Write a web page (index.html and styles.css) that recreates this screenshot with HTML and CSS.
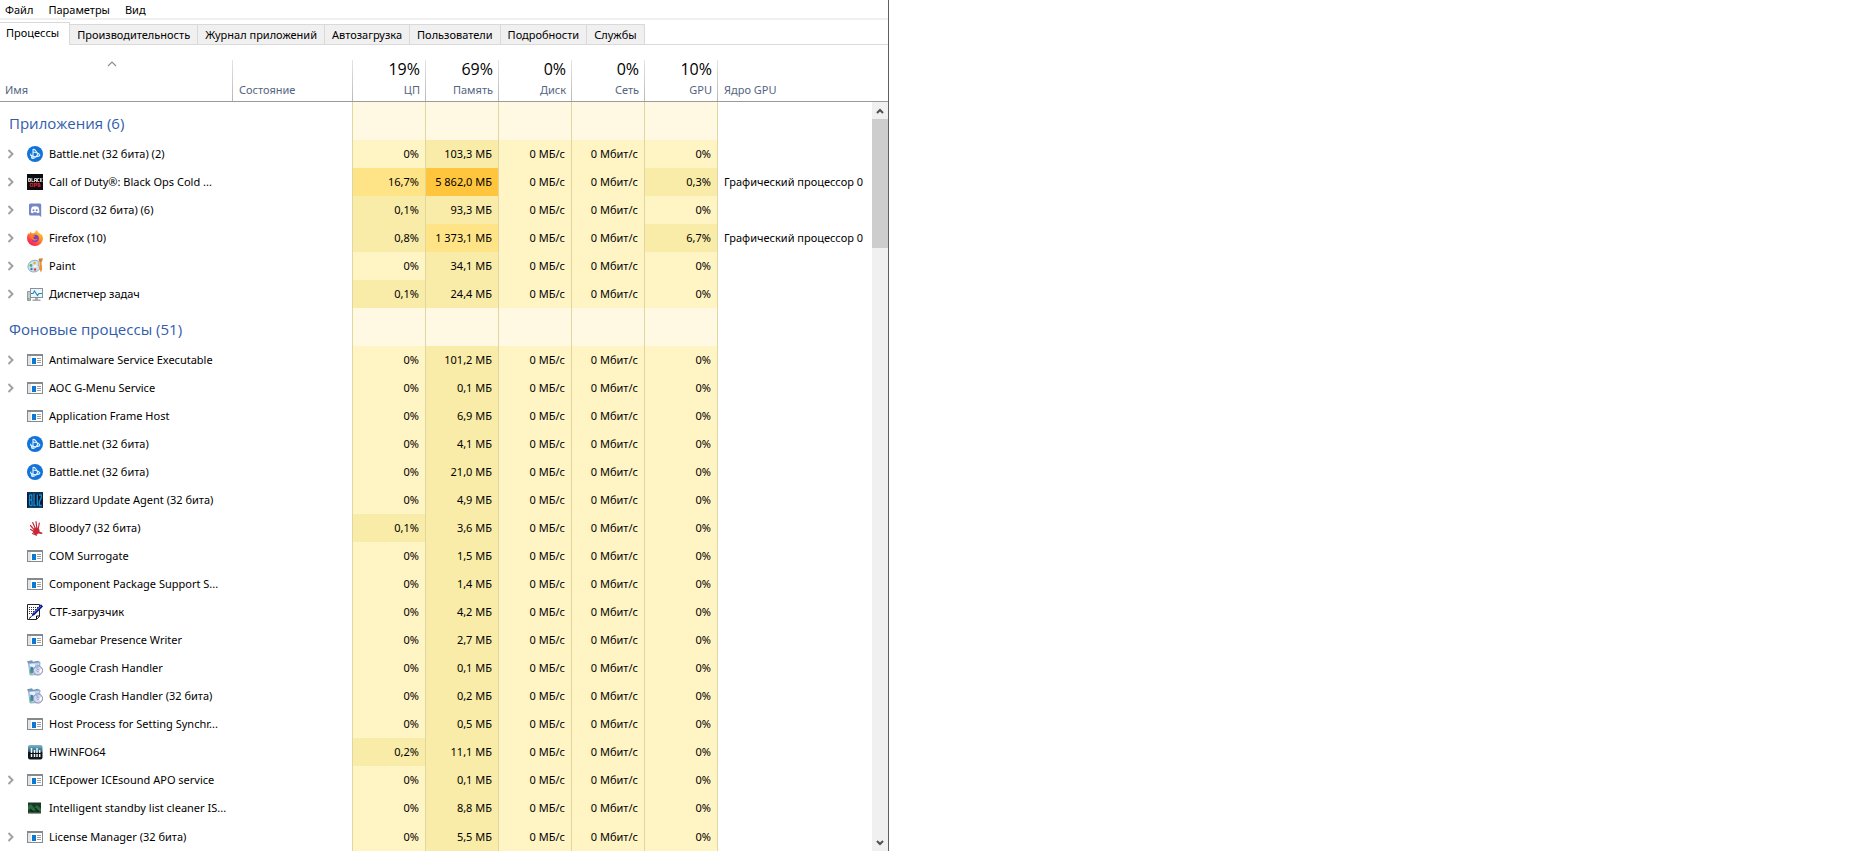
FILE: index.html
```html
<!DOCTYPE html>
<html lang="ru">
<head>
<meta charset="utf-8">
<title>Диспетчер задач</title>
<link rel="stylesheet" href="styles.css">
</head>
<body>
<svg class="sprite" aria-hidden="true">
  <symbol id="chev" viewBox="0 0 16 16"><path d="M5.500 4l4 4-4 4" fill="none" stroke="#a0a0a0" stroke-width="1.900"/></symbol>
  <symbol id="bnet" viewBox="0 0 16 16"><circle cx="8" cy="8" r="8" fill="#1273d8"/><g fill="none" stroke="#e4f4ff" stroke-width="1.100" stroke-linejoin="round" stroke-linecap="round"><path d="M6 11.500V3.500c1.500-.8 3.400 1.500 4.300 4M6.200 6.300c2.800-.3 5.600.8 6.500 2.200.5 1.100-.7 1.700-2.200 1.900M10.800 8c-1 2.200-3 4.200-4.800 4.500-1.500.1-1.800-1.200-1-2.700M3.800 8c-.6.8 0 1.600 1.200 2 1.600.6 3 .8 4.800.7"/></g></symbol>
  <symbol id="cod" viewBox="0 0 16 16"><path fill="#0d0c0e" d="M0 0h16v16H0z"/><g fill="none" stroke="#d8d8da" stroke-width=".9"><path d="M1.500 4v3.500h2V4.500h-2M1.500 6h2M4.800 4v3.500h1.800M7.500 8V4.500h2V8M7.500 6.500h2M12.300 4.500h-1.800v3h1.800M13.500 4v4M15.300 4l-1.500 2 1.500 2"/></g><g fill="none" stroke="#c01f2b" stroke-width="1.100"><path d="M3.300 9.500h2.500v2.800H3.300zM7.500 13V9.500h2v1.700h-2M13 9.500h-2v1.400h2v1.500h-2.300"/></g></symbol>
  <symbol id="disc" viewBox="0 0 16 16"><path fill="#7487c4" d="M3.500 1.500h9.300q1.400 0 1.400 1.400V15l-2-1.500H3.500Q2 13.500 2 12V3q0-1.500 1.500-1.500z"/><path fill="#fff" d="M5 4.800q3-1.300 6.200 0 1.400 2.700 1.300 5.400-1.200 1-2.300 1l-.5-.9H6.500l-.5.9q-1.300-.1-2.200-1Q3.600 7.500 5 4.800z"/><circle cx="6.500" cy="8.200" r="1" fill="#7487c4"/><circle cx="9.700" cy="8.200" r="1" fill="#7487c4"/></symbol>
  <linearGradient id="fg" x1=".9" y1="0" x2=".2" y2="1"><stop offset="0" stop-color="#ffe03a"/><stop offset=".4" stop-color="#ff9526"/><stop offset=".75" stop-color="#ff3d4a"/><stop offset="1" stop-color="#ee1467"/></linearGradient>
  <symbol id="fox" viewBox="0 0 16 16"><path fill="url(#fg)" d="M9.800.2c1 .7 1.500 1.600 1.800 2.500 1 .4 1.300 1 1.500 1.600l1.200-.3c1 1.300 1.700 2.900 1.700 4.500a8 7.500 0 0 1-16 0C0 6.300.6 4.200 1.700 3c.1.600.2.900.5 1.100C2.800 2.900 3.400 2 4.200 1.500c-.1.700.1 1.200.5 1.700L7.500 3C8 1.700 8.700.8 9.800.2z"/><circle cx="8.200" cy="8.300" r="3.600" fill="#7a3fc9"/><path fill="#ff7a2c" d="M3.500 5.500c1.500-.9 3.500-.5 4.800.7L6.300 7.300c-.2 1 .4 1.600 1.400 1.800 1.500.2 2-.7 3-.4-.8 1.700-3.200 2.400-5 1.200-1.500-1-2.400-2.500-2.200-4.400z"/></symbol>
  <symbol id="paint" viewBox="0 0 16 16"><path fill="#cfe3f0" stroke="#6f9ab8" stroke-width=".8" d="M1 9C.7 5 4.500 2 8.500 2.300c2.500.2 3.500 1.600 3.200 3-.3 1.500-.5 2 .6 3.300 1.400 2-.8 4.600-4.300 5.200C4 14.500 1.300 12.500 1 9z"/><circle cx="4" cy="7.500" r="1.400" fill="#55b04c"/><circle cx="7.500" cy="5" r="1.300" fill="#e8b030"/><circle cx="4.500" cy="11" r="1.200" fill="#3978c5"/><circle cx="8" cy="11.500" r="1.200" fill="#d8483c"/><ellipse cx="8" cy="8.200" rx="1.500" ry="1" fill="#fff"/><path fill="#c9803c" d="M12 .5h2.200l1.500-.5-.4 3-1 1h-1.800L11.500 2z"/><path fill="#ef9130" d="M12.500 4h2l.7 7-1.200 3.500L12.300 11z"/></symbol>
  <symbol id="task" viewBox="0 0 16 16"><path fill="#c5cacc" stroke="#7d8588" stroke-width=".8" d="M.5 5.500h3v9h-3z"/><path fill="#66b34a" d="M1 12h1.500v1.500H1z"/><path fill="#8a9296" d="M3 2h13v10H3z"/><path fill="#e9f6fc" d="M4 3h11v8H4z"/><path d="M4 7.500h2L7.500 5l3 4.500L12 7.500h3" fill="none" stroke="#2387b5" stroke-width="1.100"/><path fill="#a4abae" d="M8 12h3v1.500h2.500V15h-8v-1.500H8z"/></symbol>
  <symbol id="exe" viewBox="0 0 16 12"><path fill="#858a8c" d="M0 0h16v12H0z"/><path fill="#fff" d="M1 2h14v9H1z"/><path fill="#e2e6e8" d="M1 2h3v9H1z"/><path fill="#0b78d4" d="M5 4h4v6H5z"/><path stroke="#9a9fa2" d="M10 4.500h4M10 6.500h4M10 8.500h4"/></symbol>
  <symbol id="bliz" viewBox="0 0 16 16"><path fill="#101a2c" d="M0 0h16v16H0z"/><path fill="none" stroke="#168fdb" stroke-width="1.300" d="M2.500 3v10.500M2.500 3h2.300v4.500L3.500 8l1.500 1v4.500H2.500M7 1.500v12h1.700M10.300 2.500v11.500M12 3h2.300v2.500L12.300 10v3.500h2.500"/><path fill="none" stroke="#0c5f9e" stroke-width=".8" d="M.5 1h15M.5 15.300h15"/></symbol>
  <symbol id="hand" viewBox="0 0 16 16"><path fill="#c6283a" d="M7 8.500q2.500-1.800 4.500-.3 1.500 1.500 1 3.300l2.800 1.200q.6 1.200-.8 1.300l-3.500-.6-.7 1q-2.200.9-3.200-.7L5.600 12l.9-1z"/><path fill="none" stroke="#c6283a" stroke-width="1.200" stroke-linecap="round" d="M6.800 11.500L3.500 9.300M7 9.700L3.500 5.500M8.300 8.500L5.700 2.500M9.800 8L9 1.500M11.300 8.500l1-5.500M5.500 13.500l4 1.700"/></symbol>
  <symbol id="ctf" viewBox="0 0 16 16"><path fill="#fff" stroke="#222" d="M.5.5h12v12l-3 3h-9z"/><path stroke="#333" stroke-dasharray="1 1" d="M2 3.500h9M2 5.500h8M2 7.500h6M2 9.500h4"/><path fill="#0c1a8c" d="M14 .3L16 2.500 7.500 11l-3 1.500 1-3z"/><path stroke="#000" d="M4.500 12.500L2 14.500M9.500 15v-3h3" fill="none"/><path stroke="#6c8be0" stroke-width=".7" d="M14 2L7 9"/></symbol>
  <symbol id="crash" viewBox="0 0 16 16"><path fill="#b9d3ea" stroke="#7e9fc0" stroke-width=".8" d="M1.500 3L13 2l-1 12.500-9 .5z"/><path fill="#7a96b5" d="M0 1.200L5 .3l1 1.500 5-1 1.500 1.500L1 3.600z"/><path fill="#e6f1fa" d="M3 4h5v3.500H3z"/><path fill="#3f9e6a" d="M3 10l3-2v5l-2.500.7z"/><path fill="#3a79c9" d="M3.500 6.500l3 1-1 3-2-.7z"/><circle cx="11" cy="10.500" r="4.600" fill="#d5d9ef" stroke="#8089ad" stroke-width=".9"/><path fill="#aab6ec" d="M11 10.500L8 7.300a4 4 0 0 1 3.500-1z"/><path fill="#fff" d="M11 10.500l4-1.500a4 4 0 0 1-1.500 4z"/><circle cx="11" cy="10.500" r="1.100" fill="#fff" stroke="#7680a5" stroke-width=".6"/></symbol>
  <linearGradient id="hg" x1="0" y1="0" x2="0" y2="1"><stop offset="0" stop-color="#7db9d3"/><stop offset=".5" stop-color="#20526b"/><stop offset=".52" stop-color="#081018"/><stop offset="1" stop-color="#15181b"/></linearGradient>
  <symbol id="hwi" viewBox="0 0 16 16"><rect x="1" y="1" width="14.500" height="14.500" rx="2" fill="url(#hg)"/><path stroke="#f1f6f8" stroke-width="1.500" d="M4.500 4v5M7.500 6v3M10 4v5M12.700 6v3M4.500 10v3M7.500 10v3M10 10v3M12.700 10v3"/></symbol>
  <symbol id="islc" viewBox="0 0 16 16"><path fill="#143b24" d="M1 2.500h13v11H1z"/><path fill="#2c6b3b" d="M1 6l3-2 3 4 3-3 4 4v3l-5-2-4 1-4-1.500z"/><path stroke="#0c1f18" stroke-width="1.200" d="M3 9l3 3M8 8l4 4"/><path fill="#8e9b92" d="M1 12.700h13v1H1z"/></symbol>
</svg>

<main class="window">
  <nav class="menu" aria-label="Меню">
    <button>Файл</button><button>Параметры</button><button>Вид</button>
  </nav>
  <div class="tabs" role="tablist">
    <button role="tab" class="tab active" aria-selected="true">Процессы</button>
    <button role="tab" class="tab">Производительность</button>
    <button role="tab" class="tab">Журнал приложений</button>
    <button role="tab" class="tab">Автозагрузка</button>
    <button role="tab" class="tab">Пользователи</button>
    <button role="tab" class="tab">Подробности</button>
    <button role="tab" class="tab">Службы</button>
  </div>

  <div class="list">
    <table class="procs">
      <colgroup><col class="c-name"><col class="c-state"><col class="c-num"><col class="c-num"><col class="c-num"><col class="c-num"><col class="c-num"><col></colgroup>
      <thead>
        <tr>
          <th class="left"><button><span class="sort"><svg width="10" height="6" viewBox="0 0 10 6" aria-hidden="true"><path d="M1 5l4-4 4 4" fill="none" stroke="#8a8f96" stroke-width="1.200"/></svg></span>Имя</button></th>
          <th class="left"><button>Состояние</button></th>
          <th><button><span class="total">19%</span>ЦП</button></th>
          <th><button><span class="total">69%</span>Память</button></th>
          <th><button><span class="total">0%</span>Диск</button></th>
          <th><button><span class="total">0%</span>Сеть</button></th>
          <th><button><span class="total">10%</span>GPU</button></th>
          <th class="left last"><button>Ядро GPU</button></th>
        </tr>
      </thead>
      <tbody>
        <tr class="group"><th colspan="2">Приложения (6)</th><td></td><td></td><td></td><td></td><td></td><td></td></tr>
        <tr><td><div class="name"><button class="exp" aria-label="Развернуть"><svg><use href="#chev"/></svg></button><svg class="ico"><use href="#bnet"/></svg><span>Battle.net (32 бита) (2)</span></div></td><td></td><td>0%</td><td class="h1">103,3 МБ</td><td>0 МБ/с</td><td>0 Мбит/с</td><td>0%</td><td></td></tr>
        <tr><td><div class="name"><button class="exp" aria-label="Развернуть"><svg><use href="#chev"/></svg></button><svg class="ico"><use href="#cod"/></svg><span>Call of Duty®: Black Ops Cold ...</span></div></td><td></td><td class="h2">16,7%</td><td class="h3">5 862,0 МБ</td><td>0 МБ/с</td><td>0 Мбит/с</td><td class="h1">0,3%</td><td>Графический процессор 0</td></tr>
        <tr><td><div class="name"><button class="exp" aria-label="Развернуть"><svg><use href="#chev"/></svg></button><svg class="ico"><use href="#disc"/></svg><span>Discord (32 бита) (6)</span></div></td><td></td><td class="h1">0,1%</td><td class="h1">93,3 МБ</td><td>0 МБ/с</td><td>0 Мбит/с</td><td>0%</td><td></td></tr>
        <tr><td><div class="name"><button class="exp" aria-label="Развернуть"><svg><use href="#chev"/></svg></button><svg class="ico"><use href="#fox"/></svg><span>Firefox (10)</span></div></td><td></td><td class="h1">0,8%</td><td class="h2">1 373,1 МБ</td><td>0 МБ/с</td><td>0 Мбит/с</td><td class="h1">6,7%</td><td>Графический процессор 0</td></tr>
        <tr><td><div class="name"><button class="exp" aria-label="Развернуть"><svg><use href="#chev"/></svg></button><svg class="ico"><use href="#paint"/></svg><span>Paint</span></div></td><td></td><td>0%</td><td class="h1">34,1 МБ</td><td>0 МБ/с</td><td>0 Мбит/с</td><td>0%</td><td></td></tr>
        <tr><td><div class="name"><button class="exp" aria-label="Развернуть"><svg><use href="#chev"/></svg></button><svg class="ico"><use href="#task"/></svg><span>Диспетчер задач</span></div></td><td></td><td class="h1">0,1%</td><td class="h1">24,4 МБ</td><td>0 МБ/с</td><td>0 Мбит/с</td><td>0%</td><td></td></tr>
        <tr class="group"><th colspan="2">Фоновые процессы (51)</th><td></td><td></td><td></td><td></td><td></td><td></td></tr>
        <tr><td><div class="name"><button class="exp" aria-label="Развернуть"><svg><use href="#chev"/></svg></button><svg class="ico exe"><use href="#exe"/></svg><span>Antimalware Service Executable</span></div></td><td></td><td>0%</td><td class="h1">101,2 МБ</td><td>0 МБ/с</td><td>0 Мбит/с</td><td>0%</td><td></td></tr>
        <tr><td><div class="name"><button class="exp" aria-label="Развернуть"><svg><use href="#chev"/></svg></button><svg class="ico exe"><use href="#exe"/></svg><span>AOC G-Menu Service</span></div></td><td></td><td>0%</td><td class="h1">0,1 МБ</td><td>0 МБ/с</td><td>0 Мбит/с</td><td>0%</td><td></td></tr>
        <tr><td><div class="name single"><svg class="ico exe"><use href="#exe"/></svg><span>Application Frame Host</span></div></td><td></td><td>0%</td><td class="h1">6,9 МБ</td><td>0 МБ/с</td><td>0 Мбит/с</td><td>0%</td><td></td></tr>
        <tr><td><div class="name single"><svg class="ico"><use href="#bnet"/></svg><span>Battle.net (32 бита)</span></div></td><td></td><td>0%</td><td class="h1">4,1 МБ</td><td>0 МБ/с</td><td>0 Мбит/с</td><td>0%</td><td></td></tr>
        <tr><td><div class="name single"><svg class="ico"><use href="#bnet"/></svg><span>Battle.net (32 бита)</span></div></td><td></td><td>0%</td><td class="h1">21,0 МБ</td><td>0 МБ/с</td><td>0 Мбит/с</td><td>0%</td><td></td></tr>
        <tr><td><div class="name single"><svg class="ico"><use href="#bliz"/></svg><span>Blizzard Update Agent (32 бита)</span></div></td><td></td><td>0%</td><td class="h1">4,9 МБ</td><td>0 МБ/с</td><td>0 Мбит/с</td><td>0%</td><td></td></tr>
        <tr><td><div class="name single"><svg class="ico"><use href="#hand"/></svg><span>Bloody7 (32 бита)</span></div></td><td></td><td class="h1">0,1%</td><td class="h1">3,6 МБ</td><td>0 МБ/с</td><td>0 Мбит/с</td><td>0%</td><td></td></tr>
        <tr><td><div class="name single"><svg class="ico exe"><use href="#exe"/></svg><span>COM Surrogate</span></div></td><td></td><td>0%</td><td class="h1">1,5 МБ</td><td>0 МБ/с</td><td>0 Мбит/с</td><td>0%</td><td></td></tr>
        <tr><td><div class="name single"><svg class="ico exe"><use href="#exe"/></svg><span>Component Package Support S...</span></div></td><td></td><td>0%</td><td class="h1">1,4 МБ</td><td>0 МБ/с</td><td>0 Мбит/с</td><td>0%</td><td></td></tr>
        <tr><td><div class="name single"><svg class="ico"><use href="#ctf"/></svg><span>CTF-загрузчик</span></div></td><td></td><td>0%</td><td class="h1">4,2 МБ</td><td>0 МБ/с</td><td>0 Мбит/с</td><td>0%</td><td></td></tr>
        <tr><td><div class="name single"><svg class="ico exe"><use href="#exe"/></svg><span>Gamebar Presence Writer</span></div></td><td></td><td>0%</td><td class="h1">2,7 МБ</td><td>0 МБ/с</td><td>0 Мбит/с</td><td>0%</td><td></td></tr>
        <tr><td><div class="name single"><svg class="ico"><use href="#crash"/></svg><span>Google Crash Handler</span></div></td><td></td><td>0%</td><td class="h1">0,1 МБ</td><td>0 МБ/с</td><td>0 Мбит/с</td><td>0%</td><td></td></tr>
        <tr><td><div class="name single"><svg class="ico"><use href="#crash"/></svg><span>Google Crash Handler (32 бита)</span></div></td><td></td><td>0%</td><td class="h1">0,2 МБ</td><td>0 МБ/с</td><td>0 Мбит/с</td><td>0%</td><td></td></tr>
        <tr><td><div class="name single"><svg class="ico exe"><use href="#exe"/></svg><span>Host Process for Setting Synchr...</span></div></td><td></td><td>0%</td><td class="h1">0,5 МБ</td><td>0 МБ/с</td><td>0 Мбит/с</td><td>0%</td><td></td></tr>
        <tr><td><div class="name single"><svg class="ico"><use href="#hwi"/></svg><span>HWiNFO64</span></div></td><td></td><td class="h1">0,2%</td><td class="h1">11,1 МБ</td><td>0 МБ/с</td><td>0 Мбит/с</td><td>0%</td><td></td></tr>
        <tr><td><div class="name"><button class="exp" aria-label="Развернуть"><svg><use href="#chev"/></svg></button><svg class="ico exe"><use href="#exe"/></svg><span>ICEpower ICEsound APO service</span></div></td><td></td><td>0%</td><td class="h1">0,1 МБ</td><td>0 МБ/с</td><td>0 Мбит/с</td><td>0%</td><td></td></tr>
        <tr><td><div class="name single"><svg class="ico"><use href="#islc"/></svg><span>Intelligent standby list cleaner IS...</span></div></td><td></td><td>0%</td><td class="h1">8,8 МБ</td><td>0 МБ/с</td><td>0 Мбит/с</td><td>0%</td><td></td></tr>
        <tr><td><div class="name"><button class="exp" aria-label="Развернуть"><svg><use href="#chev"/></svg></button><svg class="ico exe"><use href="#exe"/></svg><span>License Manager (32 бита)</span></div></td><td></td><td>0%</td><td class="h1">5,5 МБ</td><td>0 МБ/с</td><td>0 Мбит/с</td><td>0%</td><td></td></tr>
      </tbody>
    </table>
    <div class="side">
      <div class="corner"></div>
      <div class="scroll">
        <button aria-label="Вверх"><svg width="8" height="6" viewBox="0 0 8 6"><path d="M1 5l3-3 3 3" fill="none" stroke="#505050" stroke-width="2"/></svg></button>
        <div class="track"><div class="thumb"></div></div>
        <button aria-label="Вниз"><svg width="8" height="6" viewBox="0 0 8 6"><path d="M1 1l3 3 3-3" fill="none" stroke="#505050" stroke-width="2"/></svg></button>
      </div>
    </div>
  </div>
</main>
</body>
</html>
```
FILE: styles.css
```css
* { box-sizing: border-box; }
body { margin: 0; background: #fff; color: #000; font: 11px/16px "Noto Sans", "Open Sans", sans-serif; }
button { border: 0; margin: 0; padding: 0; background: none; color: inherit; font: inherit; cursor: default; }
.sprite { position: absolute; width: 0; height: 0; }

.window { width: 47.6%; min-width: 880px; border-right: 1px solid #5c5f63; }

.menu { display: flex; gap: 15px; height: 20px; padding: 1px 5px 0; border-bottom: 2px solid #f0f0f0; }

.tabs { display: flex; align-items: flex-end; height: 25px; border-bottom: 1px solid #d9d9d9; }
.tab { height: 20px; padding: 1px 7px 0; background: #f0f0f0; border: 1px solid #d9d9d9; border-width: 1px 1px 0 0; white-space: nowrap; }
.tab.active { height: 23px; margin-bottom: -1px; padding: 0 10px 3px 6px; background: #fff; }

.list { display: flex; padding-top: 15px; }
.procs { flex: 1; min-width: 0; table-layout: fixed; border-collapse: separate; border-spacing: 0; }
.c-name { width: 233px; }
.c-state { width: 120px; }
.c-num { width: 73px; }

thead th { height: 42px; padding: 0; border-bottom: 1px solid #9a9a9a; font-weight: 400; color: #56657f; vertical-align: bottom;
  background: linear-gradient(#e4e4e4, #b8b8b8) right / 1px 100% no-repeat; }
thead th.last { background: none; }
thead button { display: flex; flex-direction: column; justify-content: flex-end; align-items: flex-end; width: 100%; height: 41px; padding: 0 6px 3px; line-height: 16px; }
thead .left button { align-items: flex-start; }
thead tr th:first-child button { padding: 0 14px 3px 5px; }
.total { color: #000; font: 16px/22px "Open Sans", "Noto Sans", sans-serif; padding-bottom: 2px; }
.sort { display: flex; align-self: center; height: 22px; padding-top: 1px; }

tbody td { height: 28px; padding: 0 6px; background: #fff4c4; border-right: 1px solid #e2d6a0; text-align: right; white-space: nowrap; }
tbody td:first-child { padding: 0; background: none; border: 0; }
tbody tr:not(.group) td:nth-child(2) { background: none; }
tbody td:last-child, tbody .group td:last-child { padding-right: 0; background: none; border: 0; text-align: left; }
tbody .h1 { background: #f9eca8; }
tbody .h2 { background: #ffe487; }
tbody .h3 { background: #ffc63d; }
tbody tr:last-child td { height: 29px; }
.group th { height: 38px; padding: 3px 9px 0; border-right: 1px solid #e2d6a0; text-align: left; font: 15px/20px "Open Sans", "Noto Sans", sans-serif; color: #315dac; }
.group td { height: 38px; background: #fff8e3; }

.name { display: flex; align-items: center; height: 28px; padding-left: 3px; }
.name.single { padding-left: 27px; }
.exp { display: flex; width: 16px; height: 16px; margin-right: 8px; }
.exp svg, .ico { width: 16px; height: 16px; flex: none; }
.ico { margin-right: 6px; }
.ico.exe { height: 12px; }

.side { display: flex; flex-direction: column; width: 16px; flex: none; }
.corner { height: 42px; border-bottom: 1px solid #9a9a9a; }
.scroll { display: flex; flex-direction: column; flex: 1; background: #f0f0f0; }
.scroll button { display: flex; align-items: center; justify-content: center; height: 17px; }
.track { flex: 1; }
.thumb { height: 18%; background: #cdcdcd; }
```
